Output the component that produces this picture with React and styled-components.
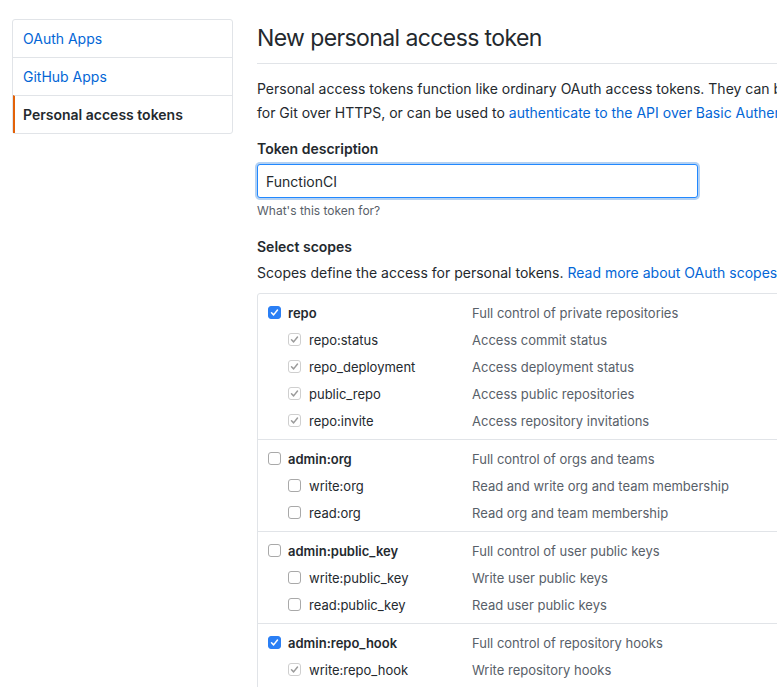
import styled, { createGlobalStyle } from "styled-components";

const GlobalStyle = createGlobalStyle`
  html, body {
    margin: 0;
    padding: 0;
    overflow: hidden;
    background: #fff;
  }
  body {
    font-family: Inter, "Liberation Sans", Arial, sans-serif;
    font-size: 14px;
    color: #24292e;
  }
`;

const Page = styled.div`
  display: flex;
  align-items: flex-start;
  gap: 24px;
  padding: 19px 0 0 12px;
  width: 1000px;
`;

const SideNav = styled.nav`
  width: 219px;
  flex-shrink: 0;
  border: 1px solid #e1e4e8;
  border-radius: 3px;
`;

const NavItem = styled.a`
  display: block;
  height: 37px;
  line-height: 38px;
  padding-left: ${(p) => (p.$active ? "8px" : "10px")};
  border-left: ${(p) => (p.$active ? "2px solid #e36209" : "none")};
  border-top: ${(p) => (p.$first ? "none" : "1px solid #e1e4e8")};
  color: ${(p) => (p.$active ? "#24292e" : "#0366d6")};
  font-weight: ${(p) => (p.$active ? 600 : 400)};
  text-decoration: none;
  font-size: 14px;
`;

const Main = styled.main`
  width: 720px;
  flex-shrink: 0;
`;

const Heading = styled.h1`
  margin: 0;
  font-size: 23px;
  font-weight: 400;
  letter-spacing: -0.6px;
  line-height: 38px;
  padding-bottom: 6px;
  border-bottom: 1px solid #e1e4e8;
`;

const Lead = styled.p`
  margin: 13px 0 13px;
  line-height: 24px;
`;

const Link = styled.a`
  color: #0366d6;
  text-decoration: none;
`;

const Label = styled.div`
  font-weight: 600;
  line-height: 22px;
`;

const Input = styled.input`
  display: block;
  box-sizing: border-box;
  width: 441px;
  height: 34px;
  margin-top: 4px;
  padding: 0 8px;
  font-family: Inter, "Liberation Sans", Arial, sans-serif;
  font-size: 14px;
  color: #24292e;
  border: 1px solid #2188ff;
  border-radius: 3px;
  box-shadow: 0 0 0 2px rgba(3, 102, 214, 0.3);
  outline: none;
`;

const Note = styled.div`
  font-size: 12px;
  line-height: 18px;
  color: #586069;
  margin: 4px 0 16px;
`;

const Hint = styled.p`
  margin: 4px 0 9px;
  line-height: 22px;
`;

const ScopeTable = styled.div`
  border: 1px solid #e1e4e8;
  border-radius: 3px;
`;

const Group = styled.div`
  padding: 5px 10px;
  border-top: ${(p) => (p.$first ? "none" : "1px solid #e1e4e8")};
`;

const Row = styled.div`
  display: grid;
  grid-template-columns: 204px 1fr;
  height: 27px;
  align-items: center;
  font-size: 13px;
`;

const ScopeName = styled.div`
  display: flex;
  align-items: center;
  gap: ${(p) => (p.$sub ? "8px" : "7px")};
  padding-left: ${(p) => (p.$sub ? "20px" : "0")};
  font-weight: ${(p) => (p.$sub ? 400 : 600)};
  color: #24292e;
`;

const Desc = styled.div`
  color: #586069;
`;

const Box = styled.span`
  box-sizing: border-box;
  width: 13px;
  height: 13px;
  border-radius: 3px;
  display: inline-flex;
  align-items: center;
  justify-content: center;
  flex-shrink: 0;
  background: ${(p) => (p.$state === "on" ? "#2a7ff5" : "#fff")};
  border: 1px solid
    ${(p) =>
      p.$state === "on" ? "#2a7ff5" : p.$state === "dim" ? "#cfcfcf" : "#a9a9a9"};
`;

const Check = ({ state }) => (
  <Box $state={state}>
    {state !== "off" && (
      <svg width="9" height="9" viewBox="0 0 9 9">
        <path
          d="M1.5 4.8 L3.6 6.9 L7.5 2"
          fill="none"
          stroke={state === "on" ? "#fff" : "#9b9b9b"}
          strokeWidth="1.5"
          strokeLinecap="round"
          strokeLinejoin="round"
        />
      </svg>
    )}
  </Box>
);

const groups = [
  {
    name: "repo",
    desc: "Full control of private repositories",
    on: true,
    subs: [
      ["repo:status", "Access commit status"],
      ["repo_deployment", "Access deployment status"],
      ["public_repo", "Access public repositories"],
      ["repo:invite", "Access repository invitations"],
    ],
  },
  {
    name: "admin:org",
    desc: "Full control of orgs and teams",
    on: false,
    subs: [
      ["write:org", "Read and write org and team membership"],
      ["read:org", "Read org and team membership"],
    ],
  },
  {
    name: "admin:public_key",
    desc: "Full control of user public keys",
    on: false,
    subs: [
      ["write:public_key", "Write user public keys"],
      ["read:public_key", "Read user public keys"],
    ],
  },
  {
    name: "admin:repo_hook",
    desc: "Full control of repository hooks",
    on: true,
    subs: [
      ["write:repo_hook", "Write repository hooks"],
      ["read:repo_hook", "Read repository hooks"],
    ],
  },
];

export default function App() {
  return (
    <>
      <GlobalStyle />
      <Page>
        <SideNav>
          <NavItem $first href="#">OAuth Apps</NavItem>
          <NavItem href="#">GitHub Apps</NavItem>
          <NavItem $active href="#">Personal access tokens</NavItem>
        </SideNav>
        <Main>
          <Heading>New personal access token</Heading>
          <Lead>
            Personal access tokens function like ordinary OAuth access tokens. They can be
            used instead of a password
            <br />
            for Git over HTTPS, or can be used to{" "}
            <Link href="#">authenticate to the API over Basic Authentication</Link>.
          </Lead>
          <Label>Token description</Label>
          <Input defaultValue="FunctionCI" />
          <Note>What's this token for?</Note>
          <Label>Select scopes</Label>
          <Hint>
            Scopes define the access for personal tokens.{" "}
            <Link href="#">Read more about OAuth scopes</Link>
          </Hint>
          <ScopeTable>
            {groups.map((g, i) => (
              <Group key={g.name} $first={i === 0}>
                <Row>
                  <ScopeName>
                    <Check state={g.on ? "on" : "off"} />
                    {g.name}
                  </ScopeName>
                  <Desc>{g.desc}</Desc>
                </Row>
                {g.subs.map(([n, d]) => (
                  <Row key={n}>
                    <ScopeName $sub>
                      <Check state={g.on ? "dim" : "off"} />
                      {n}
                    </ScopeName>
                    <Desc>{d}</Desc>
                  </Row>
                ))}
              </Group>
            ))}
          </ScopeTable>
        </Main>
      </Page>
    </>
  );
}
